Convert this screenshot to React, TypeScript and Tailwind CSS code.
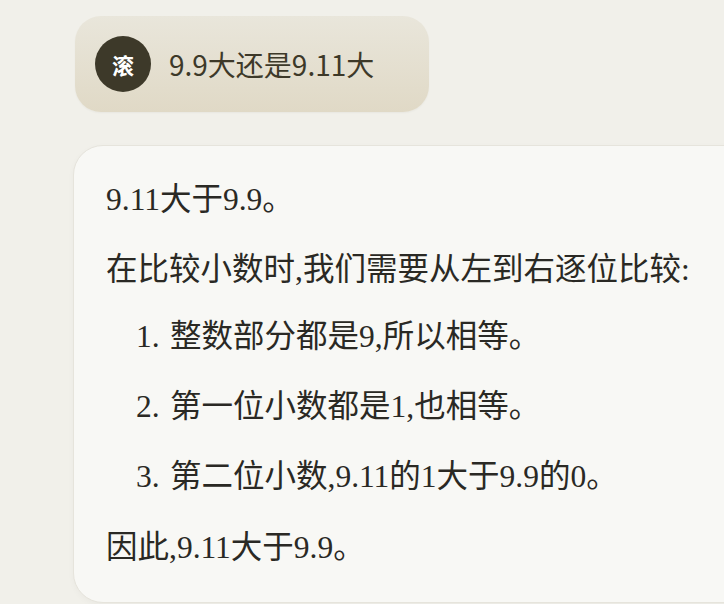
export default function App() {
  const steps = [
    '整数部分都是9,所以相等。',
    '第一位小数都是1,也相等。',
    '第二位小数,9.11的1大于9.9的0。',
  ]

  return (
    <div className="w-[724px] h-[604px] overflow-hidden bg-[#f1f0ea]">
      {/* user message */}
      <div className="pt-4 pl-[75px]">
        <div className="inline-flex items-center gap-[18px] h-[96px] pl-5 pr-[55px] rounded-[26px] bg-gradient-to-b from-[#e9e6db] to-[#e0d9c6] shadow-[0_1px_2px_rgba(0,0,0,0.04)]">
          <div className="w-[56px] h-[56px] rounded-full bg-[#3d3929] flex items-center justify-center text-white text-[22px] font-semibold font-['Noto_Sans_CJK_SC',sans-serif]">
            滚
          </div>
          <p className="text-[28px] text-[#3d3929] font-['Noto_Sans_CJK_SC',sans-serif]">
            9.9大还是9.11大
          </p>
        </div>
      </div>

      {/* assistant reply */}
      <div className="mt-[33px] ml-[73px] w-[700px] h-[458px] rounded-[30px] border border-[#e6e4dc] bg-[#f8f8f5] shadow-[0_2px_6px_rgba(0,0,0,0.03)] pt-[29px] pl-[32px] text-[31.5px] leading-[50px] text-[#2a2924] font-['Liberation_Serif','Noto_Sans_CJK_SC',serif]">
        <p>9.11大于9.9。</p>
        <p className="mt-[20px]">在比较小数时,我们需要从左到右逐位比较:</p>
        <ol className="mt-[17px] pl-[30px] flex flex-col gap-[20px]">
          {steps.map((s, i) => (
            <li key={i} className="flex">
              <span className="w-[34px]">{i + 1}.</span>
              <span>{s}</span>
            </li>
          ))}
        </ol>
        <p className="mt-[21px]">因此,9.11大于9.9。</p>
      </div>
    </div>
  )
}
